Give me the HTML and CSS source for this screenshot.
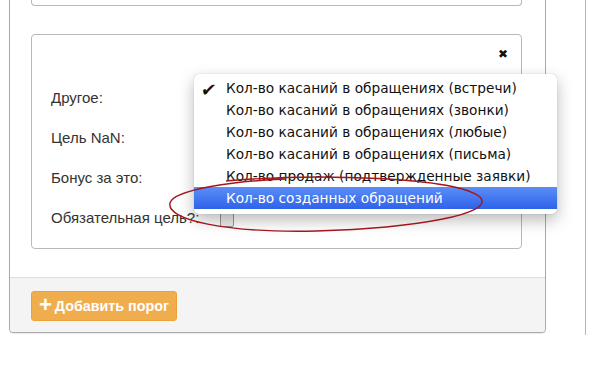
FILE: index.html
```html
<!DOCTYPE html>
<html lang="ru">
<head>
    <meta charset="UTF-8">
    <title>Пороги</title>
    <link rel="stylesheet" href="styles.css">
</head>
<body>
    <div class="page">
        <div class="panel">
            <div class="panel-body">
                <div class="card card-prev"></div>

                <div class="card">
                    <span class="close">&#10006;</span>
                    <div class="row">
                        <label>Другое:</label>
                        <span class="field"></span>
                    </div>
                    <div class="row">
                        <label>Цель NaN:</label>
                        <span class="field"></span>
                    </div>
                    <div class="row">
                        <label>Бонус за это:</label>
                        <span class="field"></span>
                    </div>
                    <div class="row">
                        <label>Обязательная цель?:</label>
                        <span class="field"><span class="checkbox"></span></span>
                    </div>

                    <ul class="menu">
                        <li><span class="check">&#10004;</span>Кол-во касаний в обращениях (встречи)</li>
                        <li>Кол-во касаний в обращениях (звонки)</li>
                        <li>Кол-во касаний в обращениях (любые)</li>
                        <li>Кол-во касаний в обращениях (письма)</li>
                        <li>Кол-во продаж (подтвержденные заявки)</li>
                        <li class="active">Кол-во созданных обращений</li>
                    </ul>
                </div>
            </div>
            <div class="panel-footer">
                <button class="btn-add"><span class="plus">+</span>Добавить порог</button>
            </div>
        </div>
    </div>

    <svg class="mark" width="340" height="60" viewBox="0 0 340 60">
        <path d="M60 5 C 150 -3, 290 1, 314 21 C 330 38, 250 52, 150 55 C 60 57, 0 44, 4 27 C 8 13, 70 5, 120 3"
              fill="none" stroke="#a3161c" stroke-width="1.4"/>
    </svg>
</body>
</html>
```

FILE: styles.css
```css
body {
    margin: 0;
    background-color: #fff;
    font-family: 'Liberation Sans', Arial, sans-serif;
    color: #333;
    overflow: hidden;
}
.page {
    width: 585px;
    height: 375px;
    border-right: 1px solid #b5b5b5;
}
.panel {
    margin-left: 9px;
    width: 535px;
    margin-top: -40px;
    border: 1px solid #aaa;
    border-radius: 0 0 4px 4px;
    background-color: #fff;
    box-shadow: 0 1px 1px rgba(0, 0, 0, 0.08);
}
.panel-body {
    padding: 0 23px 28px 21px;
    display: flex;
    flex-direction: column;
    gap: 28px;
}
.card {
    position: relative;
    border: 1px solid #b8b8b8;
    border-radius: 4px;
    padding: 42px 20px 11px 19px;
}
.card-prev {
    height: 44px;
    padding: 0;
    border-top: none;
    border-radius: 0 0 4px 4px;
}
.close {
    position: absolute;
    top: 12px;
    right: 13px;
    font-family: 'DejaVu Sans', sans-serif;
    font-size: 12px;
    color: #111;
}
.row {
    display: flex;
    align-items: center;
    height: 40px;
    font-size: 15px;
}
.row label {
    width: 169px;
}
.checkbox {
    display: inline-block;
    width: 12px;
    height: 12px;
    border: 1px solid #999;
    border-radius: 2px;
    background-color: #eee;
    margin-top: 8px;
}
.menu {
    position: absolute;
    left: 162px;
    top: 39px;
    width: 363px;
    margin: 0;
    padding: 3px 0 5px;
    list-style: none;
    background-color: #fff;
    border-radius: 5px;
    box-shadow: 0 6px 16px rgba(0, 0, 0, 0.28), 0 0 1px rgba(0, 0, 0, 0.3);
    font-family: 'DejaVu Sans', sans-serif;
    font-size: 13.7px;
    color: #111;
}
.menu li {
    position: relative;
    height: 22px;
    line-height: 22px;
    padding-left: 32px;
    white-space: nowrap;
}
.menu li.active {
    background: linear-gradient(#5b8ef6, #2f62ea);
    color: #fff;
}
.check {
    position: absolute;
    left: 7px;
    top: 2px;
    font-size: 18px;
    transform: skewX(-8deg);
}
.panel-footer {
    background-color: #f4f4f4;
    border-top: 1px solid #ddd;
    border-radius: 0 0 4px 4px;
    padding: 13px 21px 11px;
}
.btn-add {
    display: flex;
    align-items: center;
    gap: 3px;
    height: 30px;
    padding: 0 7px;
    background-color: #f0ad4e;
    border: 1px solid #eea236;
    border-radius: 3px;
    color: #fff;
    font-family: 'Liberation Sans', Arial, sans-serif;
    font-size: 14.3px;
    font-weight: bold;
}
.plus {
    font-size: 22px;
    font-weight: bold;
    line-height: 1;
    margin-top: -2px;
}
.mark {
    position: absolute;
    left: 166px;
    top: 176px;
}
```
